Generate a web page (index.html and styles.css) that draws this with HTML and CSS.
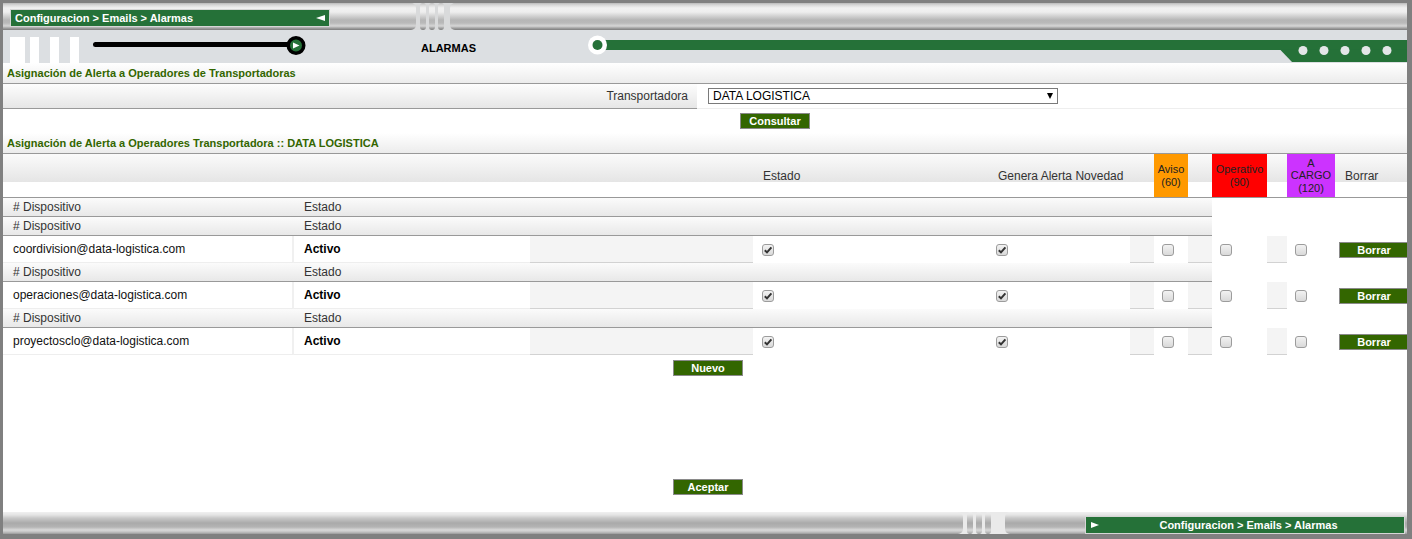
FILE: index.html
```html
<!DOCTYPE html>
<html lang="es">
<head>
<meta charset="utf-8">
<title>Alarmas</title>
<link rel="stylesheet" href="styles.css">
</head>
<body>
<div class="frame">
  <header class="topbar">
    <div class="tube tube-first">
      <div class="crumb crumb-top"><span>Configuracion &gt; Emails &gt; Alarmas</span><span class="tri tri-left"></span></div>
    </div>
    <div class="notches"><span class="notch"></span><span class="notch"></span><span class="notch"></span></div>
    <div class="tube tube-rest"></div>
  </header>

  <div class="band">
    <div class="blocks"><span class="blk blk-wide"></span><span class="blk"></span><span class="blk"></span><span class="blk"></span></div>
    <svg class="slider" width="225" height="33" viewBox="0 0 225 33">
      <line x1="10.5" y1="14.5" x2="205" y2="14.5" stroke="#000" stroke-width="5" stroke-linecap="round"/>
      <circle cx="211" cy="15.5" r="7.75" fill="#257138" stroke="#000" stroke-width="3.5"/>
      <polygon points="208,12.5 214.5,15.5 208,18.5" fill="#fff"/>
    </svg>
    <div class="band-title">ALARMAS</div>
    <svg class="track" width="819" height="33" viewBox="0 0 819 33">
      <rect x="9" y="10" width="810" height="10" fill="#257138"/>
      <polygon points="692,19.5 819,19.5 819,32 704,32" fill="#257138"/>
      <circle cx="9.5" cy="15" r="9.5" fill="#fff"/>
      <circle cx="9.5" cy="15" r="5" fill="#257138"/>
      <circle cx="715" cy="20.5" r="4.5" fill="#e4e6e8"/>
      <circle cx="736" cy="20.5" r="4.5" fill="#e4e6e8"/>
      <circle cx="757" cy="20.5" r="4.5" fill="#e4e6e8"/>
      <circle cx="778" cy="20.5" r="4.5" fill="#e4e6e8"/>
      <circle cx="799" cy="20.5" r="4.5" fill="#e4e6e8"/>
    </svg>
  </div>

  <main class="content">
    <div class="title-row">Asignación de Alerta a Operadores de Transportadoras</div>
    <div class="filter-row">
      <div class="filter-label">Transportadora</div>
      <div class="filter-field">
        <div class="select-wrap">
          <select class="select"><option>DATA LOGISTICA</option></select>
        </div>
      </div>
    </div>
    <div class="consult-row"><button class="btn">Consultar</button></div>
    <div class="title-row">Asignación de Alerta a Operadores Transportadora :: DATA LOGISTICA</div>

    <div class="grid head-row">
      <div class="span3"></div>
      <div class="h-txt h-estado">Estado</div>
      <div class="h-txt h-genera">Genera Alerta Novedad</div>
      <div></div>
      <div class="lvl aviso">Aviso<br>(60)</div>
      <div></div>
      <div class="lvl operativo">Operativo<br>(90)</div>
      <div></div>
      <div class="lvl cargo">A<br>CARGO<br>(120)</div>
      <div class="h-txt h-borrar">Borrar</div>
    </div>

    <div class="sub-row"><div class="s-disp"># Dispositivo</div><div class="s-est">Estado</div></div>
    <div class="sub-row"><div class="s-disp"># Dispositivo</div><div class="s-est">Estado</div></div>
    <div class="grid data-row">
      <div class="d-email">coordivision@data-logistica.com</div>
      <div class="d-estado">Activo</div>
      <div class="d-gray"></div>
      <div class="d-cb d-cb4"><span class="cb on"><svg width="10" height="10" viewBox="0 0 10 10"><path d="M1.8 5.2 L4 7.4 L8.4 2.4" fill="none" stroke="#333" stroke-width="2"/></svg></span></div>
      <div class="d-cb d-cb5"><span class="cb on"><svg width="10" height="10" viewBox="0 0 10 10"><path d="M1.8 5.2 L4 7.4 L8.4 2.4" fill="none" stroke="#333" stroke-width="2"/></svg></span></div>
      <div class="d-gray"></div>
      <div class="d-cb d-cbs"><span class="cb"></span></div>
      <div class="d-gray"></div>
      <div class="d-cb d-cbs"><span class="cb"></span></div>
      <div class="d-gray"></div>
      <div class="d-cb d-cbs"><span class="cb"></span></div>
      <div class="d-btn"><button class="btn">Borrar</button></div>
    </div>

    <div class="sub-row"><div class="s-disp"># Dispositivo</div><div class="s-est">Estado</div></div>
    <div class="grid data-row">
      <div class="d-email">operaciones@data-logistica.com</div>
      <div class="d-estado">Activo</div>
      <div class="d-gray"></div>
      <div class="d-cb d-cb4"><span class="cb on"><svg width="10" height="10" viewBox="0 0 10 10"><path d="M1.8 5.2 L4 7.4 L8.4 2.4" fill="none" stroke="#333" stroke-width="2"/></svg></span></div>
      <div class="d-cb d-cb5"><span class="cb on"><svg width="10" height="10" viewBox="0 0 10 10"><path d="M1.8 5.2 L4 7.4 L8.4 2.4" fill="none" stroke="#333" stroke-width="2"/></svg></span></div>
      <div class="d-gray"></div>
      <div class="d-cb d-cbs"><span class="cb"></span></div>
      <div class="d-gray"></div>
      <div class="d-cb d-cbs"><span class="cb"></span></div>
      <div class="d-gray"></div>
      <div class="d-cb d-cbs"><span class="cb"></span></div>
      <div class="d-btn"><button class="btn">Borrar</button></div>
    </div>

    <div class="sub-row"><div class="s-disp"># Dispositivo</div><div class="s-est">Estado</div></div>
    <div class="grid data-row">
      <div class="d-email">proyectosclo@data-logistica.com</div>
      <div class="d-estado">Activo</div>
      <div class="d-gray"></div>
      <div class="d-cb d-cb4"><span class="cb on"><svg width="10" height="10" viewBox="0 0 10 10"><path d="M1.8 5.2 L4 7.4 L8.4 2.4" fill="none" stroke="#333" stroke-width="2"/></svg></span></div>
      <div class="d-cb d-cb5"><span class="cb on"><svg width="10" height="10" viewBox="0 0 10 10"><path d="M1.8 5.2 L4 7.4 L8.4 2.4" fill="none" stroke="#333" stroke-width="2"/></svg></span></div>
      <div class="d-gray"></div>
      <div class="d-cb d-cbs"><span class="cb"></span></div>
      <div class="d-gray"></div>
      <div class="d-cb d-cbs"><span class="cb"></span></div>
      <div class="d-gray"></div>
      <div class="d-cb d-cbs"><span class="cb"></span></div>
      <div class="d-btn"><button class="btn">Borrar</button></div>
    </div>

    <div class="nuevo-row"><button class="btn">Nuevo</button></div>
    <div class="aceptar-row"><button class="btn">Aceptar</button></div>
  </main>

  <footer class="bottombar">
    <div class="btube btube-first"></div>
    <div class="bnotches"><span class="bnotch"></span><span class="bnotch"></span><span class="bnotch"></span></div>
    <div class="btube btube-rest">
      <div class="crumb crumb-bottom"><span class="tri tri-right"></span><span class="crumb-text">Configuracion &gt; Emails &gt; Alarmas</span></div>
    </div>
  </footer>
</div>
</body>
</html>
```

FILE: styles.css
```css
* { box-sizing: border-box; }
html, body { margin: 0; padding: 0; }
body {
  background: #808080;
  width: 1412px;
  height: 539px;
  overflow: hidden;
  font-family: Arial, "Liberation Sans", sans-serif;
  font-size: 12px;
  color: #222;
}
.frame {
  margin: 3px 5px 5px 3px;
  height: 531px;
  background: #fff;
  overflow: hidden;
  display: flex;
  flex-direction: column;
}

/* ---------- top metallic bar ---------- */
.topbar {
  height: 27px;
  flex-shrink: 0;
  display: flex;
  background: #d9dadb;
}
.tube, .notch {
  background: linear-gradient(to bottom,
    #b9b9b9 0px, #d8d8d8 2px, #f1f1f1 5px, #eeeeee 9px, #d2d2d2 13px,
    #b6b6b6 17px, #b9b9b9 20px, #d6d6d6 23px, #a4a4a4 25px, #7c7c7c 27px);
}
.tube-first {
  width: 413px;
  border-radius: 0 5px 5px 0;
  padding: 6px 0 0 7px;
}
.notches {
  width: 34px;
  display: flex;
  gap: 3px;
  padding-left: 4px;
}
.notch {
  width: 6px;
  border-radius: 3px;
}
.tube-rest {
  flex: 1;
  border-radius: 5px 0 0 5px;
}
.crumb {
  width: 320px;
  height: 18px;
  background: #257138;
  border: 1px solid #d6d6d6;
  color: #fff;
  font-weight: bold;
  font-size: 11px;
  line-height: 16px;
  display: flex;
  align-items: center;
}
.crumb-top {
  justify-content: space-between;
  padding: 0 4px 0 4px;
}
.tri { display: block; width: 0; height: 0; }
.tri-left {
  border-top: 3px solid transparent;
  border-bottom: 3px solid transparent;
  border-right: 9px solid #fff;
}
.tri-right {
  border-top: 3px solid transparent;
  border-bottom: 3px solid transparent;
  border-left: 8px solid #fff;
}

/* ---------- band with sliders ---------- */
.band {
  height: 33px;
  flex-shrink: 0;
  background: #dcdfe2;
  display: flex;
  align-items: center;
}
.blocks {
  align-self: flex-end;
  margin-left: 7px;
  display: flex;
  height: 26px;
}
.blk { width: 9px; height: 26px; background: #fff; margin-left: 11px; }
.blk-wide { width: 15px; margin-left: 0; }
.blk-wide + .blk { margin-left: 5px; }
.slider { margin-left: 6px; display: block; flex-shrink: 0; }
.band-title {
  width: 278px;
  padding-left: 111px;
  font-weight: bold;
  font-size: 11px;
  color: #000;
  padding-top: 2px;
}
.track { display: block; flex-shrink: 0; }

/* ---------- content ---------- */
.content {
  width: 1410px;
  flex-shrink: 0;
}
.title-row {
  height: 21px;
  border-bottom: 1px solid #999;
  padding-left: 4px;
  font-weight: bold;
  font-size: 11px;
  color: #336600;
  line-height: 20px;
  background: linear-gradient(to bottom, #ffffff, #ececec);
}
.filter-row {
  display: flex;
  height: 25px;
}
.filter-label {
  width: 694px;
  border-bottom: 1px solid #999;
  background: linear-gradient(to bottom, #fdfdfd, #e6e6e6);
  text-align: right;
  padding-right: 9px;
  line-height: 24px;
  color: #333;
}
.filter-field {
  flex: 1;
  border-bottom: 1px solid #eee;
  padding: 4px 0 0 11px;
}
.select-wrap {
  position: relative;
  width: 350px;
  height: 16px;
}
.select {
  -webkit-appearance: none;
  appearance: none;
  display: block;
  width: 100%;
  height: 16px;
  margin: 0;
  border: 1px solid #7a7a7a;
  border-radius: 0;
  padding: 0 0 0 4px;
  background: #fff;
  font-family: Arial, "Liberation Sans", sans-serif;
  font-size: 12px;
  line-height: 14px;
  color: #000;
}
.select-wrap::after {
  content: "";
  position: absolute;
  right: 5px;
  top: 5px;
  border-left: 3.5px solid transparent;
  border-right: 3.5px solid transparent;
  border-top: 6px solid #000;
}
.consult-row {
  height: 24px;
  padding: 4px 0 0 737px;
}
.btn {
  display: block;
  width: 70px;
  height: 16px;
  margin: 0;
  padding: 0;
  background: #336600;
  border: 1px solid #8a8a8a;
  color: #fff;
  font-family: Arial, "Liberation Sans", sans-serif;
  font-weight: bold;
  font-size: 11px;
  line-height: 14px;
  text-align: center;
}

.grid {
  display: grid;
  grid-template-columns: 291px 236px 223px 237px 140px 24px 34px 24px 55px 20px 48px 78px;
}
.head-row {
  height: 44px;
  border-bottom: 1px solid #999;
  background: linear-gradient(to bottom, #fbfbfb 0px, #e5e5e5 28px, #ffffff 28px);
}
.span3 { grid-column: span 3; }
.h-txt {
  align-self: center;
  color: #333;
  white-space: nowrap;
}
.h-estado { padding-left: 10px; }
.h-genera { padding-left: 8px; }
.h-borrar { padding-left: 10px; }
.lvl {
  display: flex;
  flex-direction: column;
  justify-content: center;
  text-align: center;
  font-size: 11px;
  line-height: 12.5px;
  color: #222;
}
.aviso { background: #ff9900; }
.operativo { background: #ff0000; }
.cargo { background: #cc33ff; }

.sub-row {
  width: 1209px;
  height: 19px;
  border-bottom: 1px solid #999;
  display: grid;
  grid-template-columns: 291px 1fr;
  background: linear-gradient(to bottom, #fbfbfb, #e8e8e8);
  line-height: 18px;
  color: #333;
}
.s-disp, .s-est { padding-left: 10px; }

.data-row { height: 27px; }
.data-row > div { display: flex; align-items: center; }
.d-email {
  padding-left: 10px;
  color: #111;
  border-right: 2px solid #f0f0f0;
  border-bottom: 1px solid #eee;
}
.d-estado {
  padding-left: 10px;
  font-weight: bold;
  color: #000;
  border-bottom: 1px solid #eee;
}
.d-gray {
  background: #f4f4f4;
  border-bottom: 1px solid #d2d2d2;
}
.d-cb4 { padding-left: 9px; }
.d-cb5 { padding-left: 6px; }
.d-cbs { padding-left: 8px; }
.d-btn { padding-left: 4px; }
.cb {
  width: 12px;
  height: 12px;
  border: 1px solid #9c9c9c;
  border-radius: 3px;
  background: linear-gradient(to bottom, #f2f2f2, #d9d9d9);
  display: flex;
  align-items: center;
  justify-content: center;
}
.cb svg { display: block; }

.nuevo-row { padding: 5px 0 0 670px; }
.aceptar-row { padding: 103px 0 0 670px; }

/* ---------- bottom bar ---------- */
.bottombar {
  margin-top: auto;
  height: 22px;
  flex-shrink: 0;
  display: flex;
  background: #eaeaea;
}
.btube, .bnotch {
  background: linear-gradient(to bottom,
    #f0f0f0 0px, #e4e4e4 3px, #c8c8c8 6px, #aaaaaa 11px, #b4b4b4 15px,
    #d9d9d9 18px, #c2c2c2 20px, #9a9a9a 22px);
}
.btube-first {
  width: 960px;
  border-radius: 0 5px 5px 0;
}
.bnotches {
  width: 42px;
  display: flex;
  gap: 3px;
  padding-left: 4px;
}
.bnotch { width: 6px; border-radius: 3px; }
.btube-rest {
  flex: 1;
  border-radius: 5px 0 0 5px;
  padding: 4px 0 0 80px;
}
.crumb-bottom {
  height: 18px;
  padding-left: 5px;
}
.crumb-text {
  flex: 1;
  text-align: center;
  padding-right: 6px;
}
```
